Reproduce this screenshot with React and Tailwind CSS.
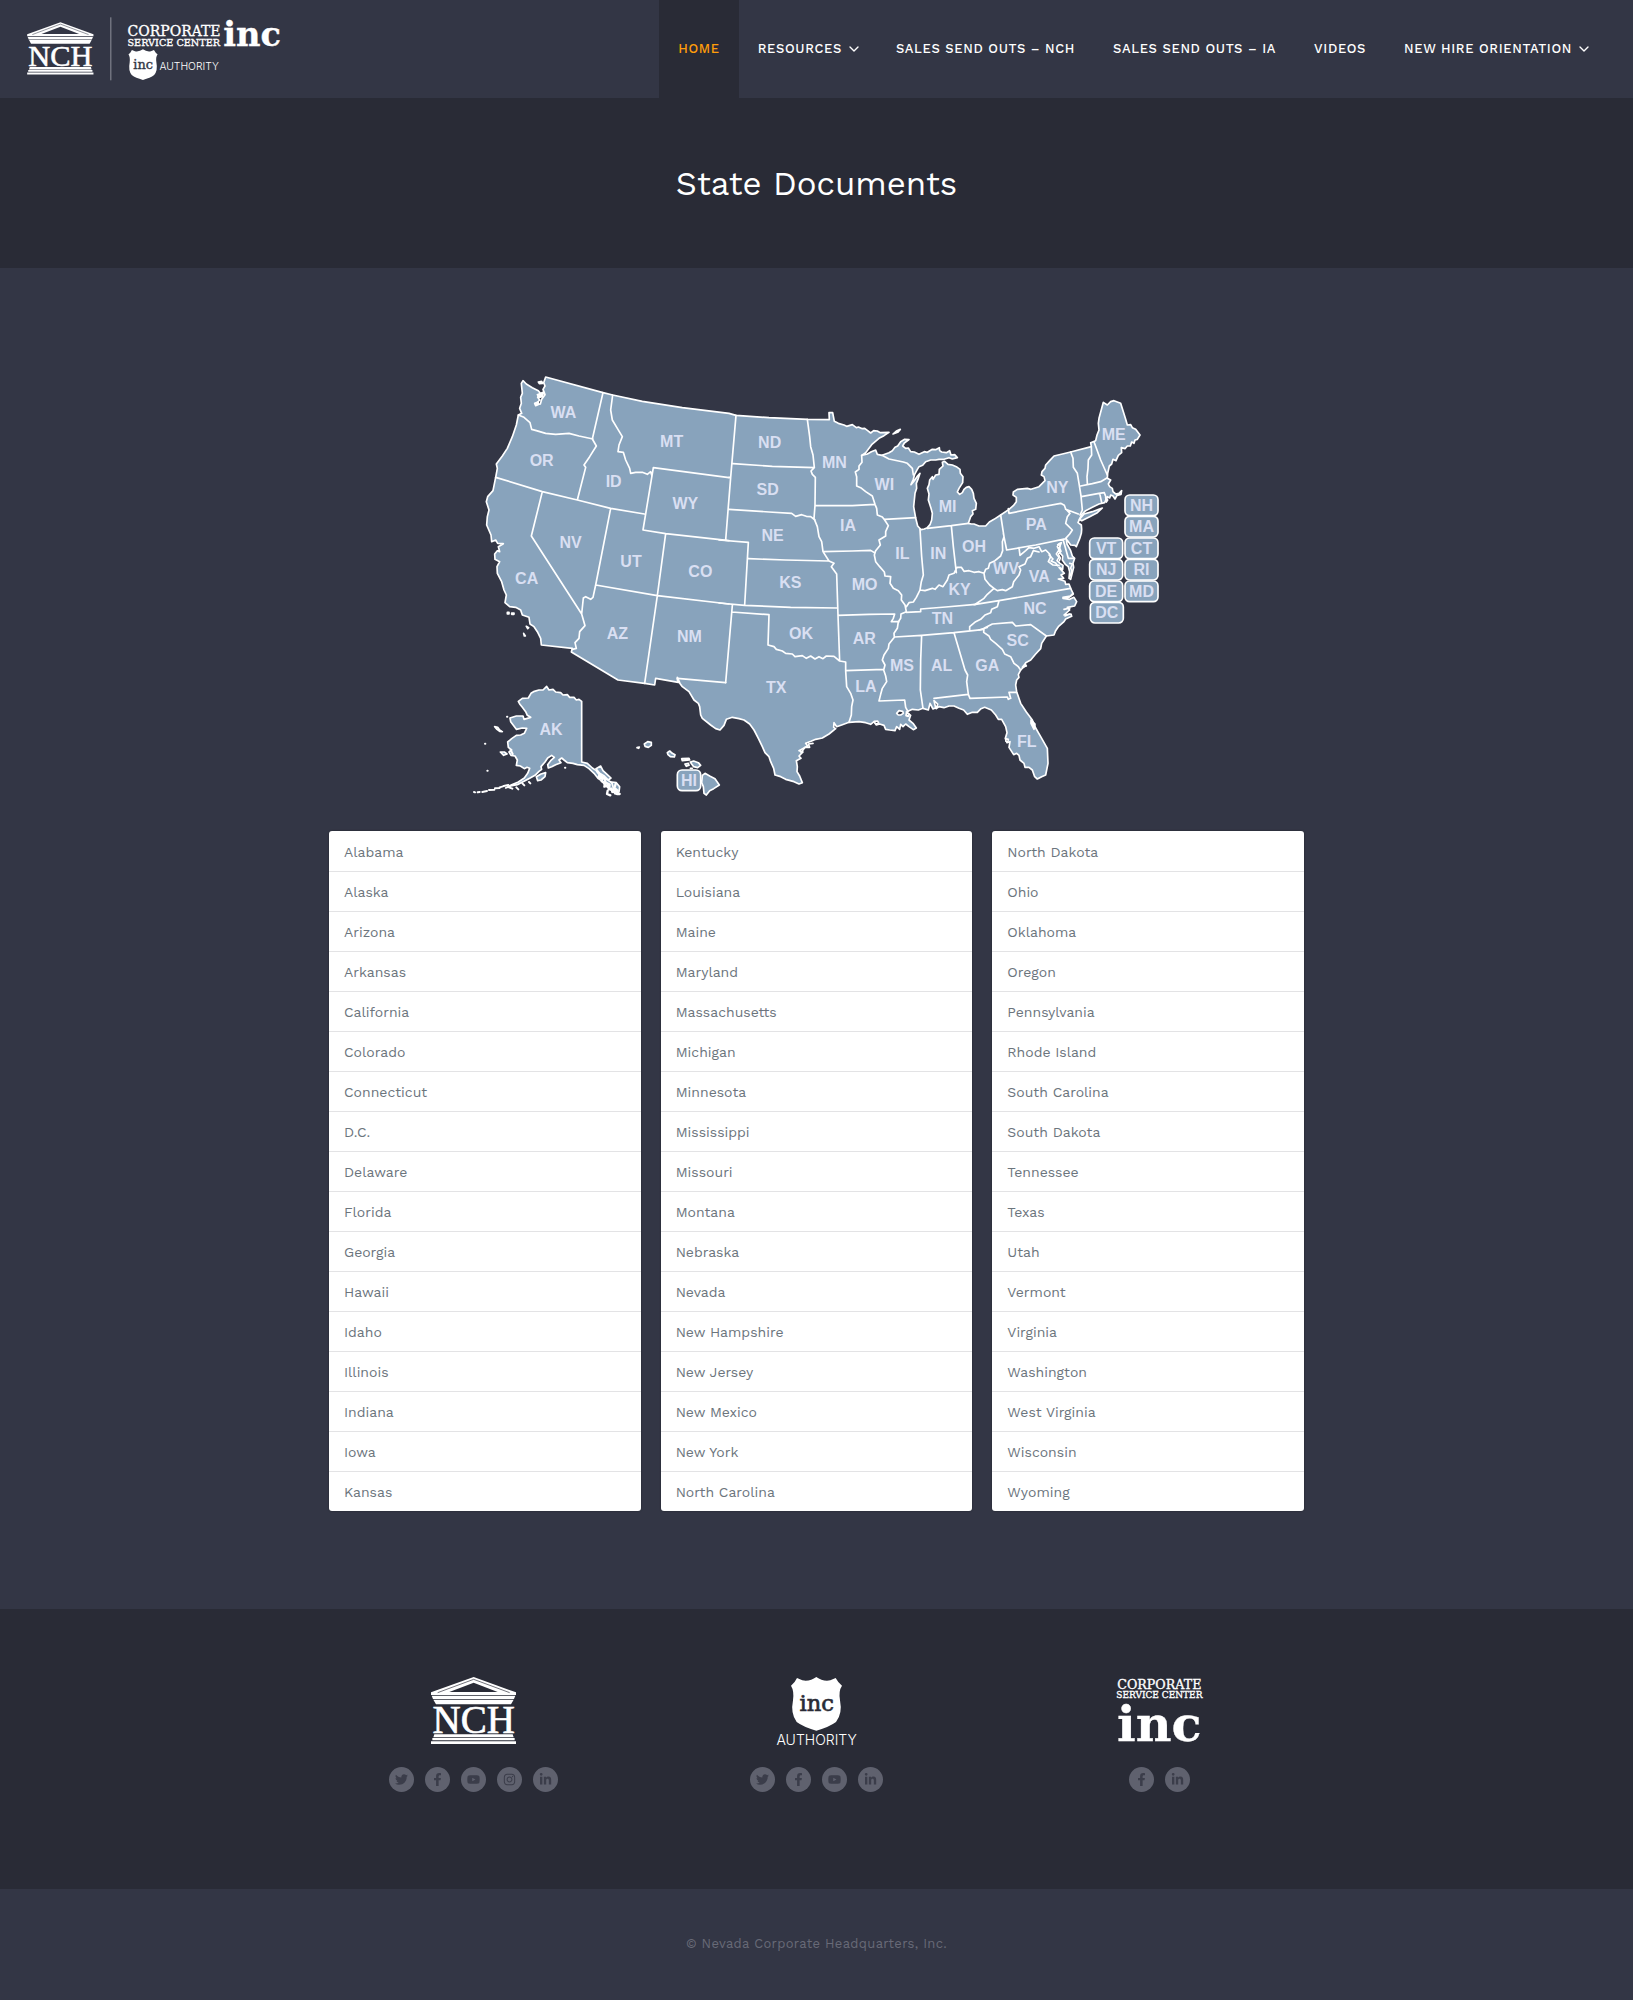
import React from "react";
import { FaTwitter, FaFacebookF, FaYoutube, FaInstagram, FaLinkedinIn } from "react-icons/fa";
import { FiChevronDown } from "react-icons/fi";

const NAV = [
  { label: "Home", active: true },
  { label: "Resources", menu: true },
  { label: "Sales Send Outs – NCH" },
  { label: "Sales Send Outs – IA" },
  { label: "Videos" },
  { label: "New Hire Orientation", menu: true },
];

const COLUMNS = [
  ["Alabama", "Alaska", "Arizona", "Arkansas", "California", "Colorado", "Connecticut", "D.C.", "Delaware", "Florida", "Georgia", "Hawaii", "Idaho", "Illinois", "Indiana", "Iowa", "Kansas"],
  ["Kentucky", "Louisiana", "Maine", "Maryland", "Massachusetts", "Michigan", "Minnesota", "Mississippi", "Missouri", "Montana", "Nebraska", "Nevada", "New Hampshire", "New Jersey", "New Mexico", "New York", "North Carolina"],
  ["North Dakota", "Ohio", "Oklahoma", "Oregon", "Pennsylvania", "Rhode Island", "South Carolina", "South Dakota", "Tennessee", "Texas", "Utah", "Vermont", "Virginia", "Washington", "West Virginia", "Wisconsin", "Wyoming"],
];

const MAINLAND =
  "M230,51 L402,98 L431,105 L520,124 L640,143 L780,160 L801,166 L900,173 L1015,178 L1081,179 L1080,158 L1091,158 L1096,184 L1108,190 L1125,195 L1133,199 L1150,194 L1162,203 L1168,201 L1180,206 L1187,205 L1195,211 L1205,219 L1214,212 L1225,213 L1234,218 L1260,217 L1245,227 L1230,235 L1208,254 L1190,278 L1178,286 " +
  "L1195,282 L1207,275 L1220,270 L1225,283 L1239,286 L1260,278 L1270,272 L1278,262 L1286,258 L1295,245 L1307,238 L1320,239 L1306,249 L1301,258 L1310,265 L1318,264 L1325,275 L1336,276 L1350,283 L1366,275 L1375,277 L1390,268 L1400,269 L1411,263 L1412,272 L1418,276 L1432,278 L1442,272 L1446,285 L1457,284 L1465,293 L1450,297 L1440,293 L1425,298 L1410,298 L1400,300 L1385,300 L1370,305 L1361,316 L1350,320 L1343,332 L1337,343 L1333,358 L1326,374 L1336,362 L1344,350 L1353,340 L1348,355 L1342,370 L1343,385 L1338,400 L1336,420 L1334,440 L1340,474 L1346,498 L1356,509 L1366,507 L1375,503 L1383,494 L1388,480 L1390,460 L1386,445 L1378,420 L1380,402 L1375,385 L1380,374 L1382,360 L1390,350 L1392,358 L1400,345 L1410,343 L1411,328 L1422,318 L1420,307 L1427,304 L1437,313 L1450,315 L1462,320 L1473,328 L1474,340 L1482,350 L1481,368 L1470,385 L1465,396 L1472,403 L1480,398 L1485,388 L1492,382 L1500,380 L1508,388 L1513,400 L1515,415 L1522,430 L1520,448 L1510,452 L1512,462 L1505,470 L1498,490 " +
  "L1507,492 L1515,492 L1530,498 L1550,498 L1561,486 L1575,478 L1595,465 L1620,448 L1633,437 L1642,425 L1642,412 L1632,405 L1633,396 L1645,388 L1675,385 L1686,388 L1710,380 L1728,362 L1725,350 L1717,345 L1719,335 L1728,325 L1730,315 L1742,302 L1755,288 L1805,276 L1867,260 L1865,248 L1880,242 L1884,225 L1890,210 L1888,190 L1890,175 L1903,127 L1915,135 L1925,125 L1935,122 L1955,130 L1963,155 L1970,178 L1975,195 L1985,194 L1990,203 L2000,208 L2013,225 L2005,238 L1998,240 L1995,250 L1988,246 L1984,258 L1975,258 L1968,266 L1957,263 L1958,278 L1948,286 L1941,302 L1932,298 L1928,312 L1921,318 L1916,340 L1915,355 L1925,360 L1918,372 L1922,380 L1930,385 L1932,395 L1940,402 L1950,400 L1958,392 L1956,403 L1944,406 L1938,417 L1932,408 L1925,405 L1922,414 L1915,410 L1907,428 L1890,432 L1870,442 L1850,452 L1838,464 L1827,488 " +
  "L1837,495 L1838,508 L1837,520 L1832,536 L1822,560 L1818,556 L1805,555 L1798,545 L1792,538 L1794,552 L1805,572 L1810,588 L1817,595 L1812,610 L1814,622 L1805,658 L1800,655 L1802,635 L1798,620 L1790,614 L1780,600 L1781,588 L1772,578 L1770,565 L1777,548 L1770,552 L1765,560 L1770,570 L1762,582 L1770,592 L1764,602 L1773,610 L1782,616 L1781,628 L1770,622 L1786,640 L1776,645 L1784,655 L1768,657 L1788,664 L1790,673 L1800,672 L1805,685 L1813,702 L1800,712 L1782,715 L1802,718 L1815,712 L1823,725 L1817,738 L1795,742 L1802,750 L1785,765 L1806,762 L1808,769 L1790,777 L1785,785 L1768,800 L1760,812 L1755,825 L1732,828 L1718,850 L1715,866 L1700,882 L1685,900 L1670,908 L1668,918 L1655,930 L1648,944 L1650,952 L1643,960 " +
  "L1640,975 L1643,995 L1655,1030 L1672,1056 L1690,1080 L1700,1104 L1715,1130 L1735,1165 L1737,1210 L1730,1245 L1718,1250 L1705,1257 L1697,1250 L1690,1230 L1680,1222 L1668,1222 L1665,1210 L1653,1200 L1650,1186 L1643,1180 L1634,1184 L1620,1162 L1623,1145 L1614,1148 L1609,1135 L1614,1118 L1610,1100 L1598,1078 L1588,1078 L1580,1065 L1567,1050 L1547,1042 L1536,1046 L1525,1057 L1510,1057 L1495,1063 L1484,1050 L1470,1045 L1455,1038 L1440,1038 L1425,1043 L1410,1040 L1402,1046 L1406,1032 L1395,1022 L1400,1043 L1392,1047 L1383,1030 L1378,1050 L1362,1045 L1348,1050 L1330,1048 L1312,1056 L1325,1066 L1320,1080 L1332,1090 L1342,1104 L1333,1109 L1320,1100 L1310,1092 L1302,1100 L1295,1093 L1292,1108 L1283,1100 L1278,1112 L1262,1110 L1250,1108 L1245,1096 L1232,1092 L1222,1095 L1215,1085 L1205,1093 L1190,1088 L1170,1085 L1140,1087 L1120,1094 L1103,1100 L1095,1088 L1094,1102 L1100,1106 L1080,1122 L1060,1134 L1040,1138 L1026,1144 L1010,1150 L1016,1158 L990,1172 L1002,1176 L990,1188 L996,1195 L982,1202 L985,1220 L984,1235 L992,1248 L1000,1268 L990,1272 L975,1265 L950,1258 L935,1250 L918,1245 L914,1225 L905,1205 L900,1190 L888,1178 L880,1160 L868,1135 L855,1110 L842,1092 L825,1080 L810,1076 L790,1072 L772,1078 L765,1096 L753,1110 L740,1106 L725,1095 L700,1075 L695,1065 L692,1040 L688,1030 L675,1020 L660,995 L640,980 L625,960 L625,952 " +
  "L632,968 L560,955 L557,975 L527,970 L447,960 L307,876 L310,865 L217,855 L215,835 L205,815 L195,800 L183,792 L180,772 L160,765 L155,750 L140,742 L122,740 L108,728 L112,705 L105,690 L98,665 L85,640 L84,620 L92,605 L78,598 L77,582 L85,572 L92,575 L88,560 L103,551 L86,550 L80,540 L68,545 L66,525 L53,495 L55,470 L60,450 L52,425 L56,410 L72,392 L80,352 L85,325 L82,312 L100,288 L115,265 L130,230 L142,195 L148,165 L158,160 L152,145 L157,130 L155,112 L160,100 L157,70 L162,62 L172,72 L190,83 L208,92 L214,100 L206,112 L212,120 L200,133 L214,132 L218,118 L228,104 L222,88 L228,78 L224,68 Z";

const WEST_BORDERS =
  "M402,98 L370,237 M431,105 L425,150 L430,180 L445,205 L460,230 L450,255 L447,275 L463,277 L470,300 L482,325 L485,340 L500,337 L520,337 L535,343 L545,335 L549,348 M148,165 L165,172 L183,188 L188,208 L202,212 L230,220 L260,223 L300,220 L330,228 L372,237 M370,237 L382,258 L362,290 L345,315 L350,322 L325,420 M80,352 L220,395 L325,420 L425,445 L526,462 M220,395 L187,528 L338,762 M425,445 L380,675 L372,712 L365,718 L350,710 L343,714 L338,762 M338,762 L348,797 L332,815 L330,835 L318,848 L322,865 L310,868 M380,675 L565,707 L780,732 M590,521 L565,707 L527,970 M780,353 L553,323 L522,510 L590,521 L780,542 M625,955 L770,968";

const CENTRAL_BORDERS =
  "M51,166 L35,352 L20,540 M30,352 L35,353 M0,540 L88,547 L77,735 M0,729 L77,736 L215,742 L355,744 M40,736 L20,968 M38,756 L150,764 L147,855 L165,860 L172,868 L190,873 L200,880 L220,882 L228,890 L250,887 L262,895 L275,888 L288,897 L300,890 L312,896 L322,888 L345,889 L362,903 L380,906 M42,311 L160,319 L286,323 M265,178 L272,230 L275,260 L282,285 L286,323 L276,333 L280,343 L289,352 L288,437 M30,448 L150,456 L218,460 L230,469 L248,464 L262,469 L275,470 L288,480 M288,437 L400,437 L468,433 M288,437 L285,475 L295,500 L300,530 L308,545 L312,575 L330,603 L345,610 L337,620 L353,642 L357,766 L362,903 M88,596 L200,600 L330,603 M312,575 L400,573 L455,571 L466,578 M428,286 L429,307 L420,318 L420,328 L409,336 L413,350 L413,378 L425,383 L440,395 L460,408 L468,433 L473,445 L475,465 L490,471 L497,480 L508,497 L500,515 L500,528 L480,540 L484,555 L470,572 L466,585 L470,605 L482,620 L496,636 L498,648 L515,650 L513,670 L523,685 L538,692 L548,705 L547,720 L558,735 L562,755 L546,762 L545,775 L538,785 L535,805 L525,820 L526,832 L510,852 L508,865 L495,885 L490,900 L498,915 L494,930 L500,948 L503,965 L490,985 L485,1003 L480,1023 L557,1020 L560,1042 L567,1055 M497,478 L590,473 M489,286 L510,297 L553,306 L565,310 L580,325 L583,345 M603,508 L608,590 L613,645 L607,665 L603,690 M562,740 L570,728 L583,726 L592,712 L598,700 L603,690 L618,692 L640,685 L648,688 L660,675 L672,680 L685,660 L690,645 L705,640 L714,622 L727,622 L735,634 L750,632 L765,637 L780,635 M625,505 L697,497 L748,490 M697,497 L703,560 L712,638 M357,766 L450,763 L527,762 L523,775 L517,785 L540,785 M562,757 L605,755 L605,747 L680,741 L770,733 M527,831 L608,826 L705,818 L790,809 M608,826 L605,900 L604,990 L612,1045 M705,818 L738,930 L746,945 L743,965 L748,1003 M380,906 L380,932 L495,928 M380,932 L383,980 L395,1000 L402,1020 L398,1040 L397,1065 L390,1087 M645,1015 L748,1003 L753,1015 L865,1011 L868,1018 L875,1015 L870,997 L893,997";

const EAST_BORDERS =
  "M60,575 L75,580 M75,580 L80,568 L88,565 L92,550 L108,542 L125,528 L131,512 L130,485 L135,470 L125,405 M50,672 L75,655 L85,643 L105,625 L92,615 L78,598 L75,580 M105,625 L115,632 L130,629 L140,632 L160,620 L164,605 L180,585 L185,570 L180,560 L198,552 L205,535 L215,530 L223,512 L240,516 M45,674 L120,662 L230,643 L335,625 M120,662 L115,680 L98,688 L95,698 L78,705 L65,718 L50,725 L32,740 L32,750 M75,745 L100,732 L160,727 L170,738 L215,734 L262,768 M75,745 L74,757 L90,768 L95,778 L110,790 L130,808 L137,822 L155,830 L165,850 L178,860 L185,870 M60,750 L85,742 M148,386 L150,400 L230,384 L305,370 L316,376 L320,387 L333,400 L325,410 L320,430 L340,450 L332,462 L320,475 M133,460 L143,510 L230,495 L322,476 M320,388 L358,402 M180,503 L183,526 L200,512 L210,503 L225,505 L240,500 L248,515 L260,510 L272,522 L275,530 L268,545 L282,555 L300,556 M312,478 L328,535 L345,535 M335,216 L342,235 L343,262 L355,280 L360,310 L366,348 L370,390 L363,405 M397,200 L398,225 L388,240 L387,265 L384,290 L385,311 M405,185 L425,240 L445,285 M365,318 L400,311 L425,305 L445,293 M367,350 L420,340 L436,338 L442,355 M422,340 L428,368";

const LABELS = [
  ["WA", 283, 175], ["OR", 218, 318], ["ID", 434, 382], ["MT", 608, 262], ["WY", 649, 447], ["NV", 305, 565], ["UT", 486, 620], ["CO", 694, 652], ["CA", 173, 672], ["AZ", 445, 837], ["NM", 661, 846],
  ["ND", 902, 263], ["SD", 896, 404], ["NE", 911, 544], ["KS", 964, 685], ["OK", 996, 836], ["MN", 1096, 325], ["WI", 1246, 391], ["MI", 1436, 457], ["IA", 1137, 512], ["IL", 1300, 598], ["IN", 1408, 598], ["MO", 1187, 690], ["KY", 1472, 705], ["TN", 1420, 792], ["AR", 1186, 852], ["MS", 1299, 932], ["AL", 1418, 932], ["LA", 1191, 997], ["TX", 922, 999],
  ["OH", 1515, 575], ["PA", 1702, 511], ["NY", 1765, 399], ["ME", 1934, 240], ["WV", 1611, 641], ["VA", 1711, 667], ["NC", 1698, 761], ["SC", 1646, 857], ["GA", 1555, 933], ["FL", 1673, 1160], ["AK", 246, 1126],
];

const BOXES = [
  ["NH", 1968, 405, 99], ["MA", 1968, 469, 99], ["CT", 1968, 534, 99], ["RI", 1968, 598, 99], ["MD", 1968, 663, 99],
  ["VT", 1862, 534, 99], ["NJ", 1862, 598, 99], ["DE", 1862, 663, 99], ["DC", 1864, 727, 99], ["HI", 625, 1230, 70],
];

function UsMap() {
  return (
    <svg viewBox="-420 0 2925 1353" className="block w-full" role="img" aria-label="Map of the United States">
      <g fill="#88a3bc" stroke="#ffffff" strokeWidth="5" strokeLinejoin="round" strokeLinecap="round">
        <path d={MAINLAND} />
        <path d="M1831,478 L1845,462 L1870,455 L1900,444 L1885,458 L1862,470 L1838,482 Z M1272,222 L1282,213 L1294,208 L1286,217 Z" />
        <path d="M208,66 L218,64 L221,70 L211,71 Z M205,104 L224,96 L220,110 L210,112 Z M197,130 L207,126 L210,133 L200,137 Z" fill="#ffffff" />
        <path d="M115,757 h5 v5 h-5 Z M128,759 h7 v4 h-7 Z M172,799 l7,4 l-3,3 Z M164,820 l5,8 l-3,0 Z" />
        <path d={WEST_BORDERS} fill="none" />
        <path d={CENTRAL_BORDERS} fill="none" transform="translate(750 0)" />
        <path d={EAST_BORDERS} fill="none" transform="translate(1470 60)" />
        <g transform="translate(750 900)">
          <path d="M533,160 L540,152 L551,154 L553,160 L545,165 L538,165 Z M562,160 l8,2 l-2,7 l-7,-2 Z M466,184 l10,-1 l3,6 l-9,3 Z M860,236 l8,2 l-2,8 l-5,-2 Z" fill="#333645" />
          <path d="M936,180 L948,192 L945,208 L936,190 Z" fill="#ffffff" />
          <path d="M246,278 L258,262 L272,262 L268,252 L282,250" fill="none" />
        </g>
        <g transform="translate(1470 60)">
          <path d="M296,494 l8,-4 l-2,14 l4,10 l-8,8 l6,12 l-3,8 M270,525 l12,12 l-6,6 l14,6 l6,8 M332,550 l8,2 l-5,12 l4,10 l-6,14 M312,652 l22,-4 l8,-8 M315,688 l18,-4 M318,708 l14,-6" fill="none" />
          <path d="M190,862 l8,-10 l4,6 Z M440,352 l6,8 l-4,6 Z" />
        </g>
        <g transform="translate(-30 900)">
          <path d="M263,79 L270,90 L282,88 L290,96 L305,98 L312,105 L325,104 L332,112 L345,112 L352,120 L360,118 L368,124 L368,306 L385,310 L400,324 L412,332 L425,345 L440,356 L455,366 L470,376 L478,388 L474,402 L462,396 L450,384 L440,378 L430,364 L418,356 L405,340 L390,326 L375,316 L355,314 L342,310 L325,308 L315,300 L308,294 L300,300 L306,308 L290,314 L278,320 L268,324 L266,314 L275,302 L286,292 L278,286 L266,294 L258,306 L246,320 L248,328 L240,334 L228,346 L212,355 L195,364 L175,374 L155,378 L140,384 L158,374 L178,366 L196,354 L206,340 L212,325 L204,322 L196,326 L184,318 L172,316 L175,300 L168,288 L156,286 L150,276 L158,270 L148,262 L146,246 L158,236 L172,226 L185,225 L196,220 L203,205 L190,204 L172,208 L163,196 L155,185 L153,174 L172,168 L192,168 L195,178 L215,172 L205,166 L200,155 L190,142 L182,132 L178,124 L190,115 L208,114 L216,100 L226,94 L240,90 L252,90 Z" />
          <path d="M107,200 L116,202 L122,210 L130,215 L122,214 L114,208 Z M124,276 L136,276 L144,282 L134,286 Z M232,350 L246,342 L260,338 L258,350 L246,360 L236,362 Z M411,326 L425,318 L432,332 L445,344 L456,354 L448,360 L436,348 L422,340 Z M458,366 L472,368 L482,380 L480,396 L468,402 Z" />
          <path d="M414,334 l8,10 l-4,8 l12,4 l-2,8 l10,6 l-2,10 l10,-4 l4,12 l8,-2 l2,10 l10,-4 l4,10 l8,0 M426,350 l10,4 l4,14 l12,6 l-2,12 l14,6 M446,392 l-2,10 l10,4 M470,372 l-4,12 l10,8" fill="none" strokeWidth="7" />
          <path d="M45,396 l3,1 M56,397 l6,-1 M70,396 l14,-3 M90,390 l16,-1 M108,385 l14,-1 M122,382 l10,-3 M134,378 l14,-3 M150,382 l10,4 M172,382 l6,6 M190,370 l6,6 M78,251 h1 M85,332 h1 M144,170 h1 M318,323 h1 M155,270 l6,12 M210,366 l4,4" strokeWidth="6" />
          <path d="M534,263 l7,-2 l-2,4 Z M556,252 L566,245 L577,247 L577,256 L568,262 L558,259 Z M625,278 L632,273 L640,280 L648,284 L646,291 L634,290 L627,284 Z M668,296 L690,295 L692,300 L670,302 Z M678,312 L688,310 L690,316 L682,319 Z M694,306 L704,303 L718,308 L725,316 L716,323 L704,320 L698,312 Z M730,346 L738,340 L752,348 L768,356 L781,375 L764,386 L752,392 L742,405 L735,400 L733,380 L728,368 Z M694,325 l6,0" />
        </g>
        {BOXES.map(([name, x, y, w]) => (
          <rect key={name} x={x} y={y} width={w} height="62" rx="14" />
        ))}
      </g>
      <g fill="#d9dff2" fontFamily="'Liberation Sans', Arial, sans-serif" fontWeight="bold" fontSize="48" textAnchor="middle">
        {LABELS.map(([name, x, y]) => (
          <text key={name} x={x} y={y}>{name}</text>
        ))}
        {BOXES.map(([name, x, y, w]) => (
          <text key={name} x={x + w / 2} y={y + 48}>{name}</text>
        ))}
      </g>
    </svg>
  );
}

// Temple mark with the initials between entablature and steps.
function Temple({ bg }) {
  return (
    <g fill="#ffffff">
      <path d="M128 0 L255 46 V54 H0 V46 Z" />
      <path d="M128 17 L200 45 H55 Z" fill={bg} />
      <path d="M128 7 L236 47 M128 7 L20 47" fill="none" stroke={bg} strokeWidth="2" />
      <path d="M2 56 H253 L249 66 H6 Z" />
      <path d="M7 68 H248 L240 82 H15 Z" />
      <path d="M10 172 H245 L248 181 H7 Z M4 183 H251 V190 H4 Z M0 193 H255 V201 H0 Z" />
      <text x="128" y="168" fontFamily="'Liberation Serif', serif" fontSize="117" textAnchor="middle" stroke="#ffffff" strokeWidth="2">NCH</text>
    </g>
  );
}

function Shield({ bg }) {
  return (
    <g>
      <path d="M76 0 Q95 14 118 10 L134 3 Q142 18 153 26 Q142 42 147 70 Q155 110 135 135 Q115 150 76 161 Q37 150 17 135 Q-2 110 6 70 Q10 42 0 26 Q11 18 18 3 L34 10 Q57 14 76 0 Z" fill="#ffffff" />
      <text x="77" y="103" fill={bg} stroke={bg} strokeWidth="2" fontFamily="'DejaVu Serif', serif" fontSize="68" textAnchor="middle">inc</text>
    </g>
  );
}

function HeaderLogo() {
  return (
    <svg viewBox="80 50 770 195" className="h-[65px] w-[257px] shrink-0 overflow-visible" role="img" aria-label="NCH, Corporate Service Center Inc, Inc Authority">
      <g transform="translate(80 66) scale(.78)"><Temple bg="#333645" /></g>
      <path d="M331 51 V240" stroke="#8f919b" strokeWidth="3" />
      <g fill="#ffffff" stroke="#ffffff" fontFamily="'DejaVu Serif', serif">
        <text x="381" y="107" fontSize="42">CORPORATE</text>
        <text x="381" y="137" fontSize="29">SERVICE CENTER</text>
        <text x="668" y="137" fontSize="101" fontWeight="bold">inc</text>
      </g>
      <g transform="translate(384 147) scale(.57)"><Shield bg="#333645" /></g>
      <text x="477" y="209" fill="#ffffff" fontFamily="Inter, sans-serif" fontWeight="300" fontSize="31">AUTHORITY</text>
    </svg>
  );
}

function NchLogo() {
  return (
    <svg viewBox="0 0 255 204" className="h-[68px] w-[85px] overflow-visible" role="img" aria-label="NCH"><Temple bg="#292b36" /></svg>
  );
}

function AuthorityLogo() {
  return (
    <svg viewBox="0 0 255 204" className="h-[68px] w-[85px] overflow-visible" role="img" aria-label="Inc Authority">
      <g transform="translate(51 0)"><Shield bg="#292b36" /></g>
      <text x="128" y="203" fill="#ffffff" fontFamily="Inter, sans-serif" fontWeight="300" fontSize="42" textAnchor="middle">AUTHORITY</text>
    </svg>
  );
}

function CorporateLogo() {
  return (
    <svg viewBox="0 0 258 204" className="h-[68px] w-[86px] overflow-visible" role="img" aria-label="Corporate Service Center Inc">
      <g fill="#ffffff" stroke="#ffffff" fontFamily="'DejaVu Serif', serif" textAnchor="middle">
        <text x="127" y="36" fontSize="38">CORPORATE</text>
        <text x="127" y="64" fontSize="27">SERVICE CENTER</text>
        <text x="127" y="193" fontSize="148" fontWeight="bold">inc</text>
      </g>
    </svg>
  );
}

const SOCIAL = {
  Twitter: FaTwitter,
  Facebook: FaFacebookF,
  YouTube: FaYoutube,
  Instagram: FaInstagram,
  LinkedIn: FaLinkedinIn,
};

const BRANDS = [
  { name: "NCH", Logo: NchLogo, links: ["Twitter", "Facebook", "YouTube", "Instagram", "LinkedIn"] },
  { name: "Inc Authority", Logo: AuthorityLogo, links: ["Twitter", "Facebook", "YouTube", "LinkedIn"] },
  { name: "Corporate Service Center", Logo: CorporateLogo, links: ["Facebook", "LinkedIn"] },
];

export default function App() {
  return (
    <div className="min-h-screen bg-[#333645] font-['Work_Sans','Inter',sans-serif] text-white">
      <header className="flex h-[98px] items-stretch justify-between pr-[26px] pl-[27px]">
        <a href="#home" className="flex items-center" aria-label="Home page"><HeaderLogo /></a>
        <nav className="flex items-stretch">
          {NAV.map((item) => (
            <a
              key={item.label}
              href="#nav"
              className={`flex items-center gap-1 px-[19px] text-[13px] font-medium tracking-wider whitespace-nowrap uppercase ${item.active ? "bg-[#292b36] text-[#ff9d0a]" : "text-white"}`}
            >
              {item.label}
              {item.menu && <FiChevronDown className="-mr-1 size-4" strokeWidth={2} />}
            </a>
          ))}
        </nav>
      </header>

      <section className="flex h-[170px] items-center justify-center bg-[#292b36]">
        <h1 className="text-[33px] leading-none font-normal">State Documents</h1>
      </section>

      <main className="mx-auto max-w-[975px] pt-[92px] pb-[98px]">
        <UsMap />
        <div className="mt-5 grid grid-cols-3 gap-5">
          {COLUMNS.map((states) => (
            <ul key={states[0]} className="divide-y divide-[#e3e3e5] overflow-hidden rounded-[3px] bg-white pt-px shadow-[0_0_2px_#00000066]">
              {states.map((state) => (
                <li key={state}>
                  <a href="#state" className="flex h-[39px] items-center px-[15px] text-sm text-[#6c757d]">{state}</a>
                </li>
              ))}
            </ul>
          ))}
        </div>
      </main>

      <footer>
        <div className="h-[280px] bg-[#292b36] pt-[68px]">
          <div className="mx-auto grid max-w-[1029px] grid-cols-3">
            {BRANDS.map(({ name, Logo, links }) => (
              <div key={name} className="flex flex-col items-center gap-[22px]">
                <Logo />
                <div className="flex gap-[11px]">
                  {links.map((link) => {
                    const Icon = SOCIAL[link];
                    return (
                      <a key={link} href="#social" aria-label={`${name} on ${link}`} className="flex size-[25px] items-center justify-center rounded-full bg-[#5f616e] text-[#3b3d4a]">
                        <Icon className="size-[13px]" />
                      </a>
                    );
                  })}
                </div>
              </div>
            ))}
          </div>
        </div>
        <p className="flex h-[110px] items-center justify-center text-[13px] tracking-wide text-[#686a77]">© Nevada Corporate Headquarters, Inc.</p>
      </footer>
    </div>
  );
}
